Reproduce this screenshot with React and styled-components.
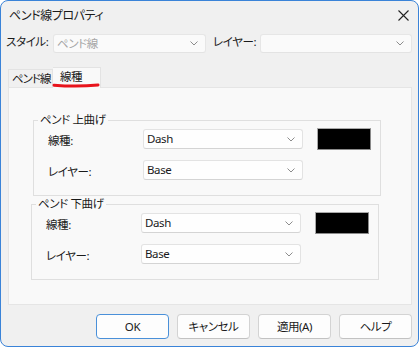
import React from "react";
import styled, { createGlobalStyle } from "styled-components";

const Global = createGlobalStyle`
  html, body { margin: 0; padding: 0; background: #ffffff; }
  body {
    font-family: "Noto Sans", "Noto Sans CJK JP", sans-serif;
    font-size: 11.5px;
    letter-spacing: -0.4px;
    color: #1a1a1a;
    font-feature-settings: "palt";
  }
  * { box-sizing: border-box; }
`;

const Window = styled.div`
  width: 419px;
  height: 347px;
  border: 1px solid #3a83d8;
  border-radius: 8px;
  background: #f0f0f0;
  display: flex;
  flex-direction: column;
  overflow: hidden;
`;

const TitleBar = styled.div`
  height: 29px;
  display: flex;
  align-items: center;
  justify-content: space-between;
  padding: 0 8px 0 8px;
`;

const Title = styled.span`
  font-size: 12px;
  line-height: 14px;
  padding-top: 1px;
`;

const CloseBtn = styled.span`
  width: 12px;
  height: 12px;
  display: flex;
`;

const TopRow = styled.div`
  margin-top: 4px;
  height: 19px;
  display: flex;
  align-items: center;
  padding-left: 5px;
`;

const TopLabel = styled.span`
  flex: none;
  width: ${(p) => p.$w}px;
  line-height: 14px;
  margin-top: -3px;
  white-space: nowrap;
`;

const Combo = styled.div`
  flex: none;
  width: ${(p) => p.$w}px;
  height: ${(p) => p.$h || 20}px;
  background: ${(p) => (p.$disabled ? "#fafafa" : "#fefefe")};
  border: 1px solid ${(p) => (p.$disabled ? "#e6e6e6" : "#e3e3e3")};
  border-bottom-color: ${(p) => (p.$disabled ? "#e3e3e3" : "#d4d4d4")};
  border-radius: 3px;
  display: flex;
  align-items: center;
  justify-content: space-between;
  padding: 0 7px 0 3px;
  color: ${(p) => (p.$disabled ? "#a6a6a6" : "#1a1a1a")};
  line-height: 14px;
`;

const Gap = styled.div`
  width: ${(p) => p.$w}px;
  flex: none;
`;

const TabBar = styled.div`
  margin-top: 14px;
  height: 20px;
  display: flex;
  align-items: flex-end;
  padding-left: 7px;
  position: relative;
  z-index: 1;
`;

const Tab = styled.div`
  position: relative;
  flex: none;
  width: ${(p) => (p.$active ? 48 : 45)}px;
  height: ${(p) => (p.$active ? 21 : 18)}px;
  margin-bottom: ${(p) => (p.$active ? -1 : 0)}px;
  padding: ${(p) => (p.$active ? "0 0 3px 7px" : "0 0 0 3px")};
  letter-spacing: ${(p) => (p.$active ? "-0.4px" : "-1px")};
  display: flex;
  align-items: center;
  background: ${(p) => (p.$active ? "#f9f9f9" : "#f0f0f0")};
  border: 1px solid #e3e3e3;
  border-bottom: none;
  border-left-width: ${(p) => (p.$active ? 0 : 1)}px;
  line-height: 14px;
  white-space: nowrap;
  overflow: visible;
  color: #1a1a1a;
`;

const Mark = styled.svg`
  position: absolute;
  left: -1px;
  top: 15px;
  width: 48px;
  height: 5px;
  overflow: visible;
`;

const Panel = styled.div`
  margin: 0 6px 0 7px;
  height: 218px;
  background: #f9f9f9;
  border: 1px solid #e5e5e5;
  padding: 32px 0 0 23px;
  display: flex;
  flex-direction: column;
  gap: 8px;
`;

const Group = styled.div`
  position: relative;
  width: 348px;
  border: 1px solid #dfdfdf;
  padding: 8px 0 15px 14px;
  margin-left: ${(p) => p.$dx || 0}px;
`;

const GroupLabel = styled.span`
  position: absolute;
  left: 4px;
  top: -8px;
  padding: 0 2px;
  background: #f9f9f9;
  line-height: 14px;
`;

const Grid = styled.div`
  display: grid;
  grid-template-columns: 81px 160px 54px;
  column-gap: 14px;
  row-gap: 10px;
  align-items: start;
`;

const FieldLabel = styled.span`
  padding-top: 5px;
  line-height: 14px;
  white-space: nowrap;
`;

const Swatch = styled.div`
  width: 54px;
  height: 22px;
  margin-top: -1px;
  background: #000;
  border: 1px solid #8a8a8a;
  border-top-color: #a9a9a9;
  border-left-color: #a9a9a9;
`;

const ButtonRow = styled.div`
  margin-top: 9px;
  display: flex;
  justify-content: flex-end;
  gap: 8px;
  padding-right: 6px;
`;

const Button = styled.button`
  width: 73px;
  height: 25px;
  border-radius: 4px;
  background: #fdfdfd;
  border: 1px solid ${(p) => (p.$default ? "#4a90d9" : "#d3d3d3")};
  border-bottom-color: ${(p) => (p.$default ? "#4a90d9" : "#c2c2c2")};
  font-family: inherit;
  font-size: 11.5px;
  letter-spacing: -0.4px;
  font-feature-settings: "palt";
  color: #1a1a1a;
  line-height: 14px;
  padding: 0;
`;

const Chevron = () => (
  <svg width="8" height="5" viewBox="0 0 8 5">
    <polyline points="0.5,0.5 4,4 7.5,0.5" fill="none" stroke="#8c8c8c" strokeWidth="1" />
  </svg>
);

const Select = ({ w, value, disabled }) => (
  <Combo $w={w} $disabled={disabled} $h={disabled ? 19 : 20}>
    <span>{value}</span>
    <Chevron />
  </Combo>
);

const Bend = ({ title, dx }) => (
  <Group $dx={dx}>
    <GroupLabel>{title}</GroupLabel>
    <Grid>
      <FieldLabel>線種:</FieldLabel>
      <Select w={160} value="Dash" />
      <Swatch />
      <FieldLabel>レイヤー:</FieldLabel>
      <Select w={160} value="Base" />
    </Grid>
  </Group>
);

export default function App() {
  return (
    <>
      <Global />
      <Window>
        <TitleBar>
          <Title>ペンド線プロパティ</Title>
          <CloseBtn>
            <svg width="11" height="11" viewBox="0 0 11 11">
              <path d="M0.5 0.5 L10.5 10.5 M10.5 0.5 L0.5 10.5" stroke="#222" strokeWidth="1.1" />
            </svg>
          </CloseBtn>
        </TitleBar>
        <TopRow>
          <TopLabel $w={47}>スタイル:</TopLabel>
          <Select w={153} value="ペンド線" disabled />
          <Gap $w={7} />
          <TopLabel $w={47}>レイヤー:</TopLabel>
          <Select w={152} value="" disabled />
        </TopRow>
        <TabBar>
          <Tab>ペンド線</Tab>
          <Tab $active>
            線種
            <Mark viewBox="0 0 48 5">
              <path d="M2 2.2 C 14 3.2, 34 3.2, 46 2" fill="none" stroke="#e8141c" strokeWidth="3" strokeLinecap="round" />
            </Mark>
          </Tab>
        </TabBar>
        <Panel>
          <Bend title="ペンド 上曲げ" dx={1} />
          <Bend title="ペンド 下曲げ" dx={-1} />
        </Panel>
        <ButtonRow>
          <Button $default>OK</Button>
          <Button>キャンセル</Button>
          <Button>適用(A)</Button>
          <Button>ヘルプ</Button>
        </ButtonRow>
      </Window>
    </>
  );
}
